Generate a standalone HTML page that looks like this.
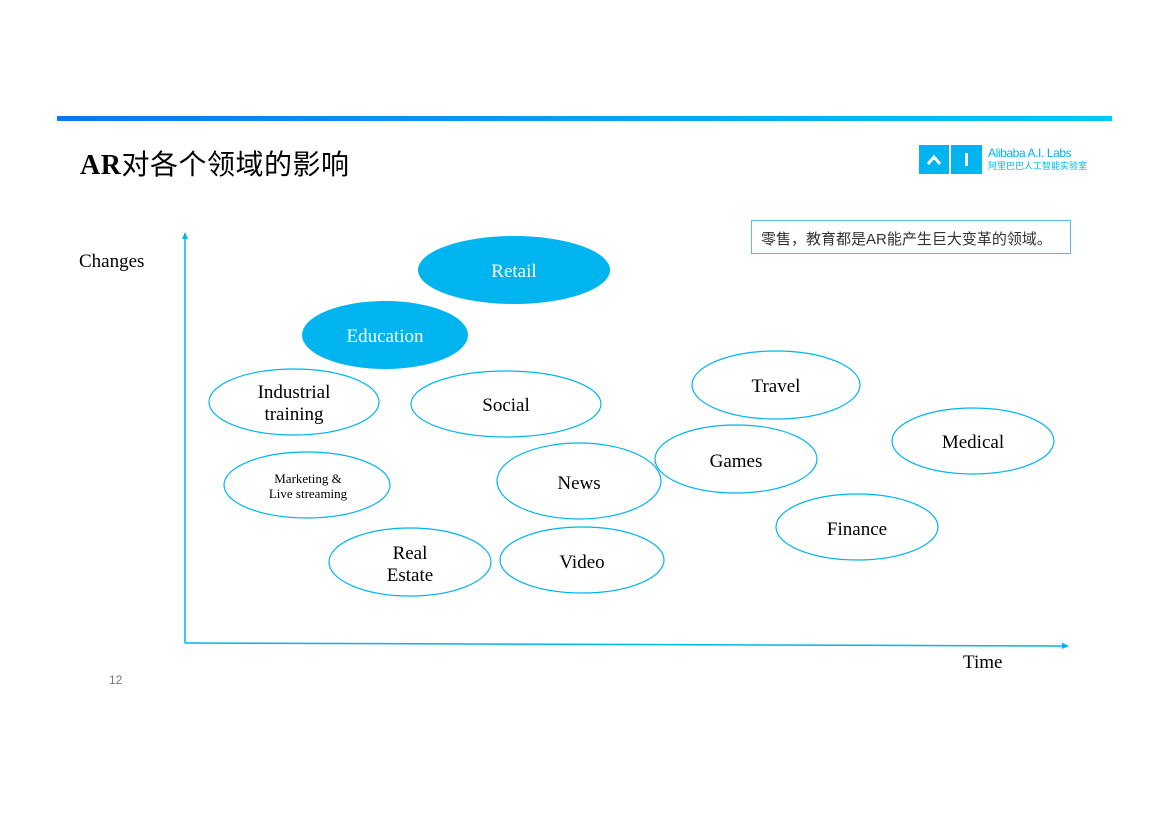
<!DOCTYPE html>
<html><head><meta charset="utf-8"><style>
body{margin:0;background:#fff;}
.p{position:relative;width:1169px;height:826px;overflow:hidden;font-family:"Liberation Serif","Noto Serif CJK SC",serif;}
.bar{position:absolute;left:57px;top:116px;width:1055px;height:5px;background:linear-gradient(90deg,#0a78f0,#00c8f8);}
.t{position:absolute;left:80px;top:143px;font-size:28px;color:#000;font-family:"Liberation Serif","Noto Sans CJK SC",serif;letter-spacing:0.5px;}
.t b{font-weight:bold;}
.note{position:absolute;left:751px;top:220px;width:320px;height:34px;border:1px solid #5bb8f0;box-sizing:border-box;font:15px "Liberation Sans","Noto Sans CJK SC",sans-serif;color:#333;padding:7px 0 0 9px;}
.lab{position:absolute;font-size:19px;color:#000;}
svg text{font-family:"Liberation Serif",serif;}
</style></head><body><div class="p">
<div class="bar"></div>
<div class="t"><b>AR</b>对各个领域的影响</div>
<div style="position:absolute;left:919px;top:145px;width:30px;height:29px;background:#00b4f0;"></div>
<div style="position:absolute;left:951px;top:145px;width:31px;height:29px;background:#00b4f0;"></div>
<svg style="position:absolute;left:919px;top:145px" width="64" height="29"><path d="M9 19 L15 12 L21 19" stroke="#fff" stroke-width="3" fill="none"/><rect x="46" y="8" width="3" height="13" fill="#fff"/></svg>
<div style="position:absolute;left:988px;top:146px;font:12px 'Liberation Sans',sans-serif;color:#00b4f0;letter-spacing:-0.4px;">Alibaba A.I. Labs</div>
<div style="position:absolute;left:988px;top:159px;font:9px 'Noto Sans CJK SC',sans-serif;color:#00b4f0;">阿里巴巴人工智能实验室</div>
<div class="note">零售，教育都是AR能产生巨大变革的领域。</div>
<div class="lab" style="left:79px;top:251px;">Changes</div>
<div class="lab" style="left:963px;top:652px;">Time</div>
<div style="position:absolute;left:109px;top:673px;font:12px 'Liberation Sans',sans-serif;color:#777;">12</div>
<svg style="position:absolute;left:0;top:0" width="1169" height="826">
<g stroke="#00b4f0" stroke-width="1.5" fill="none">
<line x1="185" y1="238" x2="185" y2="643"/><line x1="185" y1="643" x2="1064" y2="646"/>
</g>
<path d="M182 239 L185 232 L188 239Z M1062 642.5 L1069 646 L1062 649Z" fill="#00b4f0"/>
<g fill="#00b4f0"><ellipse cx="514" cy="270" rx="96" ry="34"/><ellipse cx="385" cy="335" rx="83" ry="34"/></g>
<g fill="none" stroke="#00b4f0" stroke-width="1.2">
<ellipse cx="294" cy="402" rx="85" ry="33"/><ellipse cx="506" cy="404" rx="95" ry="33"/>
<ellipse cx="776" cy="385" rx="84" ry="34"/><ellipse cx="973" cy="441" rx="81" ry="33"/>
<ellipse cx="307" cy="485" rx="83" ry="33"/><ellipse cx="579" cy="481" rx="82" ry="38"/>
<ellipse cx="736" cy="459" rx="81" ry="34"/><ellipse cx="857" cy="527" rx="81" ry="33"/>
<ellipse cx="410" cy="562" rx="81" ry="34"/><ellipse cx="582" cy="560" rx="82" ry="33"/>
</g>
<g font-size="19" text-anchor="middle" fill="#000">
<text x="514" y="277" fill="#fff">Retail</text>
<text x="385" y="342" fill="#fff">Education</text>
<text x="294" y="398">Industrial</text><text x="294" y="420">training</text>
<text x="506" y="411">Social</text>
<text x="776" y="392">Travel</text>
<text x="973" y="448">Medical</text>
<text x="308" y="483" font-size="13">Marketing &amp;</text><text x="308" y="498" font-size="13">Live streaming</text>
<text x="579" y="489">News</text>
<text x="736" y="467">Games</text>
<text x="857" y="535">Finance</text>
<text x="410" y="559">Real</text><text x="410" y="581">Estate</text>
<text x="582" y="568">Video</text>
</g>
</svg>
</div></body></html>
